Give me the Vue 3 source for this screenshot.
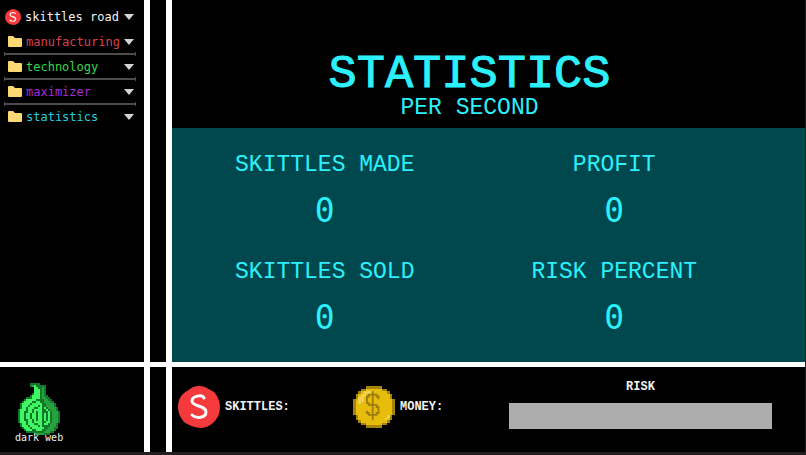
<script setup>
import { ref } from 'vue'

const folders = ref([
  { name: 'manufacturing', color: 'red' },
  { name: 'technology', color: 'green' },
  { name: 'maximizer', color: 'purple' },
  { name: 'statistics', color: 'cyan' },
])

const stats = ref([
  { label: 'SKITTLES MADE', value: 0 },
  { label: 'PROFIT', value: 0 },
  { label: 'SKITTLES SOLD', value: 0 },
  { label: 'RISK PERCENT', value: 0 },
])

const risk = ref(0)

// pixel art, one letter per pixel
const onion = [
  '......ddddd..........',
  '......dmgddddd.......',
  '........ggddmd.......',
  '........gggdmd.......',
  '........gggdmd.......',
  '.......dgggdmd.......',
  '......dggggdmdd......',
  '....dddggggdmmdd.....',
  '...dgggggddddmmdd....',
  '..dggggddggddmmmdd...',
  '.dggggdgggggddmmmmd..',
  '.dgggdggggdgddmmmmd..',
  '.dggdgggddggdgdmmmmd.',
  'dgggdggdggggddgdmmmd.',
  'dggddggdgdggdddgdmmmd',
  'dggdggdggdggdgdgdmmmd',
  'dggdggdggdggdgdgdmmmd',
  'dggdggdggdggdgdgdmmmd',
  'dggddggdgdggdgdgdmmmd',
  'dgggdggdggggddggdmmmd',
  '.dggdgggddggdggdmmmd.',
  '.dgggdggggdgddddmmmd.',
  '..dgggdggggggddmmmdd.',
  '...dgggddgggddmmmmd..',
  '....dddddddddmmmdd...',
  '........dmmmmddd.....',
]

const coin = [
  '.....dddddd.....',
  '...ddyyyyyydd...',
  '..dylllyyyyyyd..',
  '.dyllyyyyyyyyyd.',
  '.dllyyyyyyyyyyd.',
  'dyllyyyyyyyyyyyd',
  'dylyyyyyyyyyyyyd',
  'dyyyyyyyyyyyyyyd',
  'dyyyyyyyyyyyyyyd',
  'dyyyyyyyyyyyyyyd',
  'dyyyyyyyyyyyyyyd',
  '.dyyyyyyyyyyyld.',
  '.dyyyyyyyyyylyd.',
  '..dyyyyyyyyyyd..',
  '...ddyyyyyydd...',
  '.....dddddd.....',
]

// joins equal neighbours of a row into one rect
const toRuns = (rows) => {
  const runs = []
  rows.forEach((row, y) => {
    for (const m of row.matchAll(/([a-z])\1*/g)) {
      runs.push({ x: m.index, y, w: m[0].length, c: m[1] })
    }
  })
  return runs
}

const onionRuns = toRuns(onion)
const coinRuns = toRuns(coin)
</script>

<template>
  <div class="page">
    <div class="desk">
      <nav class="sidebar">
        <button class="folder root" type="button">
          <svg class="root-icon" viewBox="0 0 42 42">
            <path class="candy" d="M15 1Q21-1 27 1L36 6Q42 13 42 21Q42 30 36 36Q30 42 22 42Q13 41 6 36Q0 29 0 21Q0 12 6 7Z" />
            <path class="candy-s" d="M27 12C24 7 13 9 13 15C13 21 28 19 28 26C28 33 17 34 13 29" />
          </svg>
          <span class="folder-name">skittles road</span>
          <svg class="arrow" viewBox="0 0 10 6"><path d="M0 0H10L5 6Z" /></svg>
        </button>
        <ul class="folders">
          <li v-for="f in folders" :key="f.name">
            <button class="folder" :class="f.color" type="button">
              <svg class="folder-icon" viewBox="0 0 14 11">
                <path d="M1 0H5L7 2H13Q14 2 14 3V10Q14 11 13 11H1Q0 11 0 10V1Q0 0 1 0Z" />
              </svg>
              <span class="folder-name">{{ f.name }}</span>
              <svg class="arrow" viewBox="0 0 10 6"><path d="M0 0H10L5 6Z" /></svg>
            </button>
          </li>
        </ul>
      </nav>

      <div class="gutter"></div>

      <main class="main">
        <header class="title">
          <h1>STATISTICS</h1>
          <p>PER SECOND</p>
        </header>
        <section class="stats">
          <div class="stat" v-for="s in stats" :key="s.label">
            <h2>{{ s.label }}</h2>
            <span class="value">{{ s.value }}</span>
          </div>
        </section>
      </main>

      <div class="corner">
        <button class="dark-web" type="button">
          <svg class="onion" viewBox="0 0 21 26" shape-rendering="crispEdges">
            <rect v-for="(r, i) in onionRuns" :key="i" :class="r.c" :x="r.x" :y="r.y" :width="r.w" height="1" />
          </svg>
          <span>dark web</span>
        </button>
      </div>

      <div class="gutter"></div>

      <footer class="bar">
        <div class="counter">
          <svg class="counter-icon" viewBox="0 0 42 42">
            <path class="candy" d="M15 1Q21-1 27 1L36 6Q42 13 42 21Q42 30 36 36Q30 42 22 42Q13 41 6 36Q0 29 0 21Q0 12 6 7Z" />
            <path class="candy-s" d="M26 12C24 8 14 10 14 15C14 21 28 19 28 26C28 32 18 33 14 29" />
          </svg>
          <span>SKITTLES:</span>
        </div>
        <div class="counter">
          <svg class="counter-icon coin" viewBox="0 0 16 16">
            <g shape-rendering="crispEdges">
              <rect v-for="(r, i) in coinRuns" :key="i" :class="r.c" :x="r.x" :y="r.y" :width="r.w" height="1" />
            </g>
            <path class="dollar" d="M7.5 2V13M9.7 5V4H9V3.3H6V4H5.3V6.5H6V7.2H9V8H9.7V10.3H9V11H6V10.3H5.3V9.4" />
          </svg>
          <span>MONEY:</span>
        </div>
        <div class="risk">
          <label for="risk">RISK</label>
          <progress id="risk" :value="risk" max="100"></progress>
        </div>
      </footer>
    </div>
  </div>
</template>

<style>
body {
  margin: 0;
  background-color: #231f20;
}
</style>

<style scoped>
.page {
  min-height: 100vh;
  box-sizing: border-box;
  padding: 0 1px 3px 0;
  display: flex;
  background-color: #231f20;
  color: #f2f2f2;
  font-family: "Liberation Mono", monospace;
}
.desk {
  flex: 1;
  display: grid;
  grid-template-columns: 144px 16px 1fr;
  grid-template-rows: 1fr auto;
  gap: 5px 6px;
  background-color: #ffffff;
}
.sidebar,
.gutter,
.main,
.corner,
.bar {
  background-color: #000000;
}
button {
  border: none;
  background: none;
  color: inherit;
  cursor: pointer;
  font-family: "DejaVu Sans Mono", monospace;
}

/* sidebar */
.sidebar {
  padding-top: 4px;
}
.folders {
  list-style: none;
  margin: 0;
  padding: 0;
}
.folders li {
  position: relative;
}
.folders li:not(:last-child)::after {
  content: "";
  position: absolute;
  left: 4px;
  right: 8px;
  bottom: -2px;
  height: 4px;
  box-sizing: border-box;
  border: solid #4c4c4c;
  border-width: 0 1px;
  background: linear-gradient(#4c4c4c, #4c4c4c) center / 100% 2px no-repeat;
}
.folder {
  width: 100%;
  height: 25px;
  padding: 0 10px 0 8px;
  display: flex;
  align-items: center;
  gap: 4px;
  font-size: 12px;
  line-height: 16px;
}
.folder.root {
  padding-left: 5px;
}
.folder-name {
  flex: 1;
  text-align: left;
  white-space: nowrap;
}
.root-icon {
  width: 16px;
  height: 16px;
}
.folder-icon {
  width: 14px;
  height: 11px;
  fill: #fbd874;
}
.arrow {
  width: 10px;
  height: 6px;
  fill: #d4d4d4;
}
.red {
  color: #d8434f;
}
.green {
  color: #35d64c;
}
.purple {
  color: #a22ddb;
}
.cyan {
  color: #25d0dc;
}

/* statistics */
.main {
  display: flex;
  flex-direction: column;
  color: #2cf0fb;
}
.title {
  padding: 53px 38px 9px 0;
  text-align: center;
}
.title h1 {
  margin: 0;
  font-size: 47px;
  line-height: 44px;
  font-weight: normal;
  -webkit-text-stroke: 1px #2cf0fb;
}
.title p {
  margin: 0;
  font-size: 23px;
  line-height: 22px;
}
.stats {
  flex: 1;
  display: grid;
  grid-template-columns: 1fr 1fr;
  align-content: start;
  row-gap: 29px;
  padding: 25px 46px 24px 8px;
  background-color: #00484d;
}
.stat {
  display: flex;
  flex-direction: column;
  align-items: center;
  gap: 14px;
}
.stat h2 {
  margin: 0;
  font-size: 23px;
  line-height: 24px;
  font-weight: normal;
}
.value {
  font-family: "DejaVu Sans Mono", monospace;
  font-size: 33px;
  line-height: 40px;
}

/* bottom row */
.corner {
  padding: 16px 0 0 15px;
}
.dark-web {
  padding: 0;
  display: flex;
  flex-direction: column;
  align-items: center;
  font-size: 10px;
  line-height: 12px;
}
.dark-web span {
  margin-top: -3px;
  z-index: 1;
}
.onion {
  width: 42px;
  height: 52px;
}
.onion .d {
  fill: #12782b;
}
.onion .g {
  fill: #3ff863;
}
.onion .m {
  fill: #27a33e;
}
.bar {
  display: grid;
  grid-template-columns: 175fr 156fr 263fr;
  align-items: center;
  padding: 12px 33px 17px 6px;
  min-height: 56px;
  font-size: 12px;
  line-height: 16px;
  font-weight: bold;
}
.counter {
  display: flex;
  align-items: center;
  gap: 5px;
}
.counter-icon {
  width: 42px;
  height: 42px;
}
.candy {
  fill: #f43a3c;
}
.candy-s {
  fill: none;
  stroke: #ffffff;
  stroke-width: 3;
  stroke-linecap: round;
}
.coin .d {
  fill: #a5840b;
}
.coin .y {
  fill: #e6bd0b;
}
.coin .l {
  fill: #efd24e;
}
.dollar {
  fill: none;
  stroke: #a07c0c;
  stroke-width: 0.7;
}
.risk {
  align-self: start;
  display: flex;
  flex-direction: column;
  align-items: center;
  gap: 8px;
}
progress {
  appearance: none;
  width: 100%;
  height: 26px;
  border: none;
  background-color: #adadad;
}
progress::-webkit-progress-bar {
  background-color: #adadad;
}
progress::-webkit-progress-value {
  background-color: #f43a3c;
}
</style>
